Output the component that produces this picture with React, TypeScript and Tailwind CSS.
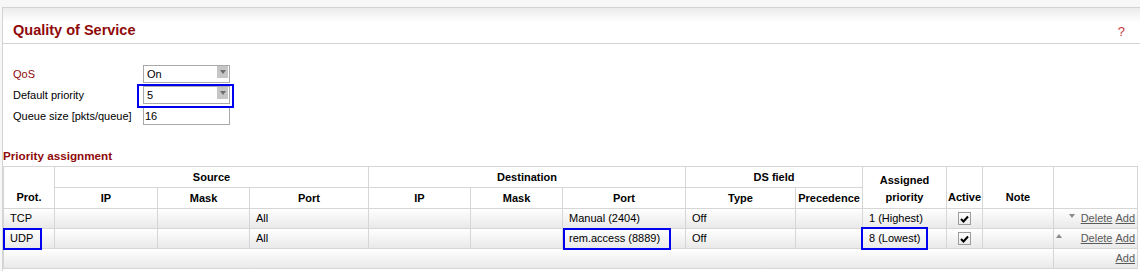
import React from 'react';

const font = "font-['Liberation_Sans',Arial,sans-serif]";

const Select: React.FC<{ value: string }> = ({ value }) => (
  <div className="relative flex h-[18px] w-[87px] items-center border border-[#a9a9a9] bg-white pl-[3px] text-[11px] text-black">
    <span>{value}</span>
    <span className="absolute right-[1px] top-[0px] flex h-[12px] w-[11px] items-center justify-center bg-[#c6c6c6]">
      <span className="h-0 w-0 border-l-[3.5px] border-r-[3.5px] border-t-[4px] border-l-transparent border-r-transparent border-t-[#6e6e6e]" />
    </span>
  </div>
);

const Check: React.FC = () => (
  <div className="mx-auto flex h-[13px] w-[13px] items-center justify-center border border-[#9c9c9c] bg-gradient-to-b from-white to-[#ececec]">
    <svg width="9" height="8" viewBox="0 0 9 8">
      <path d="M1 4 L3.5 6.5 L8 1.5" fill="none" stroke="#000" strokeWidth="2" />
    </svg>
  </div>
);

const Highlight: React.FC<{ className: string }> = ({ className }) => (
  <span className={`pointer-events-none absolute border-2 border-[#0000f0] ${className}`} />
);

const ArrowDown = () => (
  <span className="block h-0 w-0 border-l-[3.5px] border-r-[3.5px] border-t-[4px] border-l-transparent border-r-transparent border-t-[#8a8a8a]" />
);
const ArrowUp = () => (
  <span className="block h-0 w-0 border-b-[4px] border-l-[3.5px] border-r-[3.5px] border-b-[#8a8a8a] border-l-transparent border-r-transparent" />
);

type Row = {
  prot: string;
  srcPort: string;
  dstPort: string;
  type: string;
  prio: string;
  first: boolean;
};

const rows: Row[] = [
  { prot: 'TCP', srcPort: 'All', dstPort: 'Manual (2404)', type: 'Off', prio: '1 (Highest)', first: true },
  { prot: 'UDP', srcPort: 'All', dstPort: 'rem.access (8889)', type: 'Off', prio: '8 (Lowest)', first: false },
];

const th = 'border border-[#d6d6d6] bg-white px-0 text-center font-bold text-black';
const td = 'relative border border-[#d6d6d6] pl-[6px] pr-0 text-left text-black whitespace-nowrap';
const rowBg = 'h-[20px] bg-gradient-to-b from-white to-[#e8e8e8]';

export default function App() {
  return (
    <div className={`${font} h-[271px] w-[1140px] overflow-hidden bg-[#f7f7f7] pl-[2px] pt-[7px] text-[11px]`}>
      <div className="h-full border-l border-t border-[#d3d3d3] bg-white">
        <div className="flex h-[36px] items-start justify-between border-b border-[#d3d3d3] bg-[linear-gradient(to_bottom,#ebebeb,#ffffff_14px)] pl-[10px] pr-[15px] pt-[14px]">
          <h1 className="text-[14.5px] font-bold leading-[17px] text-[#8f0a0a]">Quality of Service</h1>
          <span className="pt-[1px] text-[13px] leading-[17px] text-[#c9363b]">?</span>
        </div>

        <div className="pl-[10px] pt-[21px]">
          <div className="flex h-[21px] items-start">
            <span className="w-[130px] leading-[18px] text-[#8f0a0a]">QoS</span>
            <Select value="On" />
          </div>
          <div className="flex h-[21px] items-start">
            <span className="w-[130px] leading-[18px]">Default priority</span>
            <div className="relative">
              <Select value="5" />
              <Highlight className="-bottom-[4px] -left-[6px] -right-[4px] -top-[2px]" />
            </div>
          </div>
          <div className="flex h-[21px] items-start">
            <span className="w-[130px] leading-[18px]">Queue size [pkts/queue]</span>
            <div className="h-[18px] w-[87px] border border-[#a9a9a9] bg-white pl-[1px] leading-[16px]">16</div>
          </div>
        </div>

        <div className="mt-[20px] mb-[2px] text-[11.7px] font-bold leading-[16px] text-[#8f0a0a]">Priority assignment</div>

        <table className="w-[1134px] table-fixed border-collapse text-[11px] leading-[13px]">
          <colgroup>
            <col className="w-[51px]" />
            <col className="w-[103px]" />
            <col className="w-[92px]" />
            <col className="w-[119px]" />
            <col className="w-[102px]" />
            <col className="w-[92px]" />
            <col className="w-[123px]" />
            <col className="w-[110px]" />
            <col className="w-[67px]" />
            <col className="w-[84px]" />
            <col className="w-[36px]" />
            <col className="w-[71px]" />
            <col className="w-[84px]" />
          </colgroup>
          <thead>
            <tr className="h-[21px]">
              <th rowSpan={2} className={`${th} align-bottom pb-[2px] leading-[17px]`}>Prot.</th>
              <th colSpan={3} className={th}>Source</th>
              <th colSpan={3} className={th}>Destination</th>
              <th colSpan={2} className={th}>DS field</th>
              <th rowSpan={2} className={`${th} align-bottom pb-[2px] leading-[17px]`}>
                Assigned
                <br />
                priority
              </th>
              <th rowSpan={2} className={`${th} align-bottom pb-[2px] leading-[17px]`}>Active</th>
              <th rowSpan={2} className={`${th} align-bottom pb-[2px] leading-[17px]`}>Note</th>
              <th rowSpan={2} className={th} />
            </tr>
            <tr className="h-[21px]">
              <th className={th}>IP</th>
              <th className={th}>Mask</th>
              <th className={th}>Port</th>
              <th className={th}>IP</th>
              <th className={th}>Mask</th>
              <th className={th}>Port</th>
              <th className={th}>Type</th>
              <th className={th}>Precedence</th>
            </tr>
          </thead>
          <tbody>
            {rows.map((r) => (
              <tr key={r.prot} className={rowBg}>
                <td className={td}>
                  {r.prot}
                  {!r.first && <Highlight className="-left-[1px] -top-[1px] h-[22px] w-[39px]" />}
                </td>
                <td className={td} />
                <td className={td} />
                <td className={td}>{r.srcPort}</td>
                <td className={td} />
                <td className={td} />
                <td className={td}>
                  {r.dstPort}
                  {!r.first && <Highlight className="left-0 -top-[1px] h-[22px] w-[108px]" />}
                </td>
                <td className={td}>{r.type}</td>
                <td className={td} />
                <td className={td}>
                  {r.prio}
                  {!r.first && <Highlight className="-left-[2px] -top-[2px] h-[23px] w-[67px]" />}
                </td>
                <td className={`${td} !pl-0`}>
                  <Check />
                </td>
                <td className={td} />
                <td className={`${td} !pl-0 pr-[2px]`}>
                  <div className="flex items-center justify-end">
                    <span className="mr-[6px] flex w-[7px] -translate-y-[3px] justify-center">{!r.first && <ArrowUp />}</span>
                    <span className="mr-[5px] flex w-[7px] -translate-y-[3px] justify-center">{r.first && <ArrowDown />}</span>
                    <a className="text-[#5a5a5a] underline">Delete</a>
                    <a className="ml-[3px] text-[#5a5a5a] underline">Add</a>
                  </div>
                </td>
              </tr>
            ))}
            <tr className={rowBg}>
              <td colSpan={12} className={td} />
              <td className={`${td} pr-[2px] text-right`}>
                <a className="text-[#5a5a5a] underline">Add</a>
              </td>
            </tr>
          </tbody>
        </table>
      </div>
    </div>
  );
}
